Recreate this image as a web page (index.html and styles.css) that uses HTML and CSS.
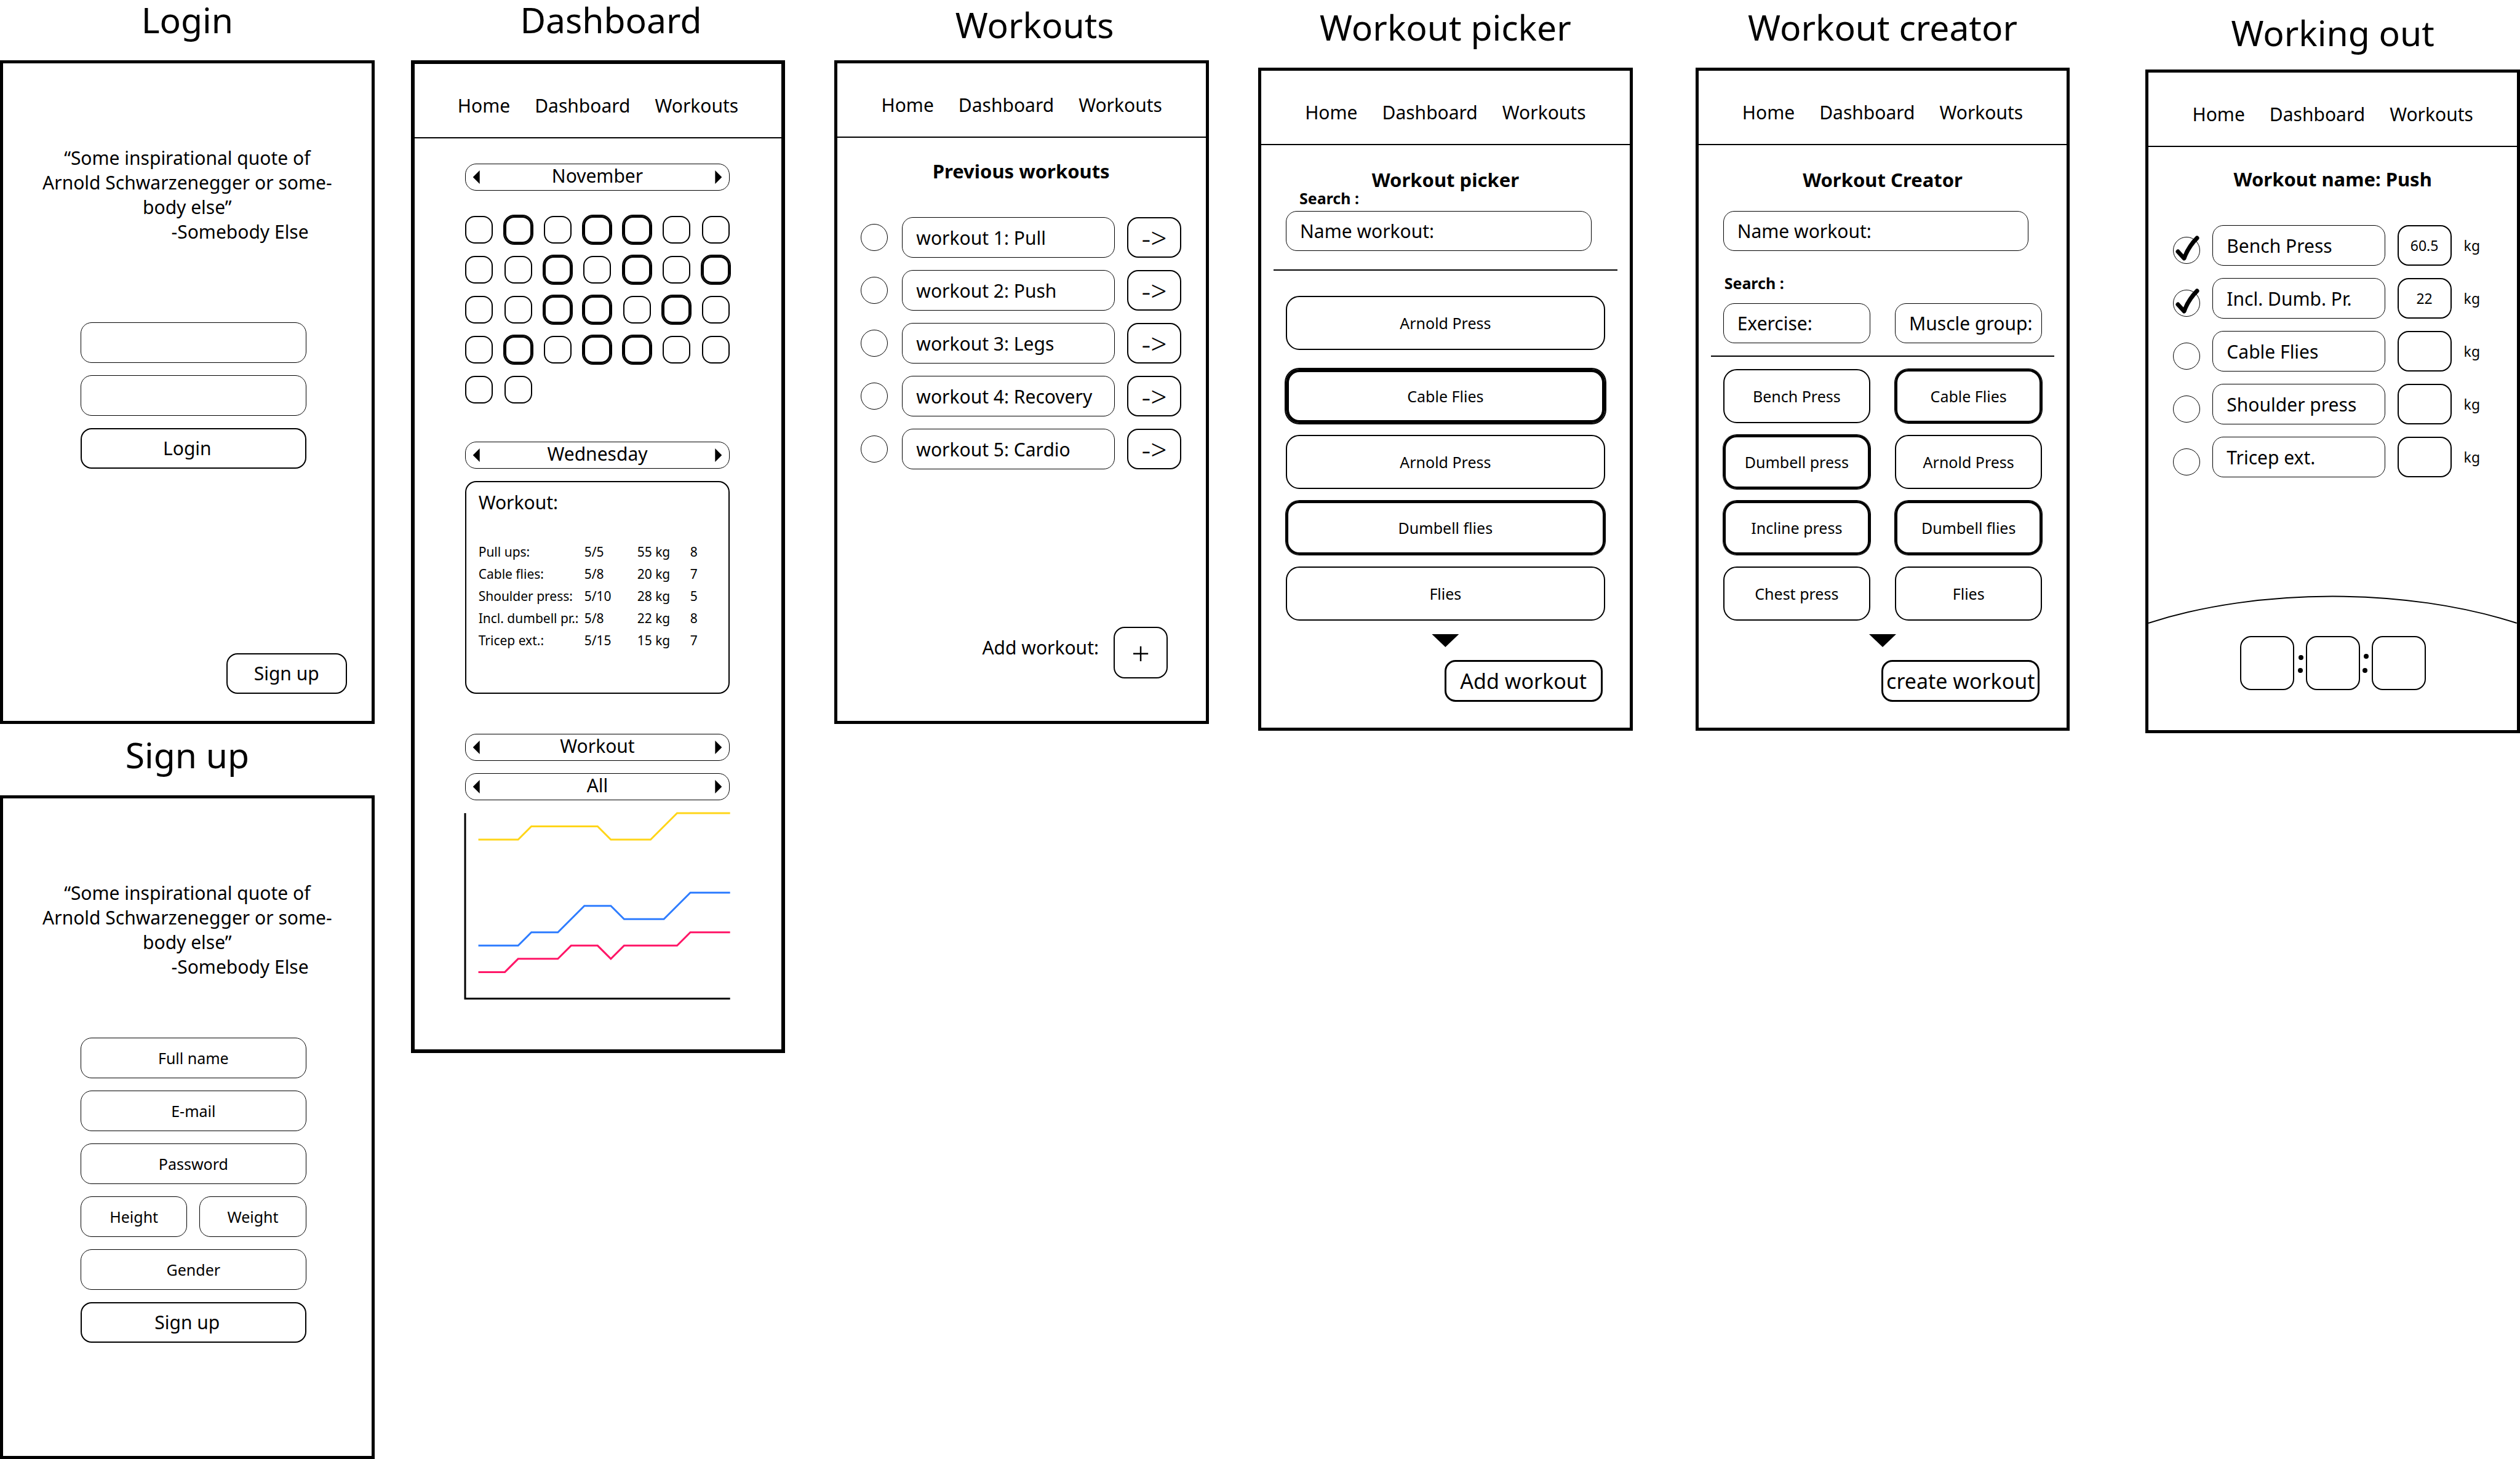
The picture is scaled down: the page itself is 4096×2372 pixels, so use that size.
FILE: index.html
```html
<!DOCTYPE html>
<html lang="en">
<head>
<meta charset="utf-8">
<title>Workout app wireframes</title>
<link rel="stylesheet" href="styles.css">
</head>
<body>
<main class="board">

  <div class="column">
    <section class="screen">
      <h2 class="title">Login</h2>
      <form class="frame auth">
        <blockquote class="quote">
          <p class="quote-text">“Some inspirational quote of<br>Arnold Schwarzenegger or some-<br>body else”</p>
          <footer class="quote-by">-Somebody Else</footer>
        </blockquote>
        <div class="fields login-fields">
          <input class="field" type="text" aria-label="User name">
          <input class="field" type="password" aria-label="Password">
          <button class="field submit" type="button">Login</button>
        </div>
        <button class="field go-signup" type="button">Sign up</button>
      </form>
    </section>
    <section class="screen signup">
      <h2 class="title">Sign up</h2>
      <form class="frame auth auth-signup">
        <blockquote class="quote">
          <p class="quote-text">“Some inspirational quote of<br>Arnold Schwarzenegger or some-<br>body else”</p>
          <footer class="quote-by">-Somebody Else</footer>
        </blockquote>
        <div class="fields signup-fields">
          <input class="field" type="text" placeholder="Full name" aria-label="Full name">
          <input class="field" type="email" placeholder="E-mail" aria-label="E-mail">
          <input class="field" type="password" placeholder="Password" aria-label="Password">
          <div class="field-pair">
            <input class="field" type="text" placeholder="Height" aria-label="Height">
            <input class="field" type="text" placeholder="Weight" aria-label="Weight">
          </div>
          <input class="field" type="text" placeholder="Gender" aria-label="Gender">
          <button class="field submit" type="button">Sign up</button>
        </div>
      </form>
    </section>
  </div>

  <section class="screen screen-dashboard">
    <h2 class="title title-right">Dashboard</h2>
    <div class="frame frame-heavy">
      <nav class="nav"><a href="#home">Home</a><a href="#dashboard">Dashboard</a><a href="#workouts">Workouts</a></nav>
      <div class="dash">
        <div class="stepper">
          <button type="button" class="step prev" aria-label="Previous month"></button>
          <span class="step-label">November</span>
          <button type="button" class="step next" aria-label="Next month"></button>
        </div>
        <div class="calendar">
          <button class="day" type="button" aria-label="1"></button>
          <button class="day done" type="button" aria-label="2"></button>
          <button class="day" type="button" aria-label="3"></button>
          <button class="day done" type="button" aria-label="4"></button>
          <button class="day done" type="button" aria-label="5"></button>
          <button class="day" type="button" aria-label="6"></button>
          <button class="day" type="button" aria-label="7"></button>
          <button class="day" type="button" aria-label="8"></button>
          <button class="day" type="button" aria-label="9"></button>
          <button class="day done" type="button" aria-label="10"></button>
          <button class="day" type="button" aria-label="11"></button>
          <button class="day done" type="button" aria-label="12"></button>
          <button class="day" type="button" aria-label="13"></button>
          <button class="day done" type="button" aria-label="14"></button>
          <button class="day" type="button" aria-label="15"></button>
          <button class="day" type="button" aria-label="16"></button>
          <button class="day done" type="button" aria-label="17"></button>
          <button class="day done" type="button" aria-label="18"></button>
          <button class="day" type="button" aria-label="19"></button>
          <button class="day done" type="button" aria-label="20"></button>
          <button class="day" type="button" aria-label="21"></button>
          <button class="day" type="button" aria-label="22"></button>
          <button class="day done" type="button" aria-label="23"></button>
          <button class="day" type="button" aria-label="24"></button>
          <button class="day done" type="button" aria-label="25"></button>
          <button class="day done" type="button" aria-label="26"></button>
          <button class="day" type="button" aria-label="27"></button>
          <button class="day" type="button" aria-label="28"></button>
          <button class="day" type="button" aria-label="29"></button>
          <button class="day" type="button" aria-label="30"></button>
        </div>
        <div class="stepper">
          <button type="button" class="step prev" aria-label="Previous day"></button>
          <span class="step-label">Wednesday</span>
          <button type="button" class="step next" aria-label="Next day"></button>
        </div>
        <div class="log">
          <h3 class="log-title">Workout:</h3>
          <table class="log-table">
            <tbody>
              <tr><th scope="row">Pull ups:</th><td>5/5</td><td>55 kg</td><td>8</td></tr>
              <tr><th scope="row">Cable flies:</th><td>5/8</td><td>20 kg</td><td>7</td></tr>
              <tr><th scope="row">Shoulder press:</th><td>5/10</td><td>28 kg</td><td>5</td></tr>
              <tr><th scope="row">Incl. dumbell pr.:</th><td>5/8</td><td>22 kg</td><td>8</td></tr>
              <tr><th scope="row">Tricep ext.:</th><td>5/15</td><td>15 kg</td><td>7</td></tr>
            </tbody>
          </table>
        </div>
        <div class="stepper">
          <button type="button" class="step prev" aria-label="Previous chart"></button>
          <span class="step-label">Workout</span>
          <button type="button" class="step next" aria-label="Next chart"></button>
        </div>
        <div class="stepper stepper-close">
          <button type="button" class="step prev" aria-label="Previous range"></button>
          <span class="step-label">All</span>
          <button type="button" class="step next" aria-label="Next range"></button>
        </div>
        <svg class="chart" viewBox="0 0 20 14" role="img" aria-label="Progress chart">
          <polyline class="axis" points="0,0 0,14 20,14"/>
          <polyline class="line line-a" points="1,2 4,2 5,1 10,1 11,2 14,2 16,0 20,0"/>
          <polyline class="line line-b" points="1,10 4,10 5,9 7,9 9,7 11,7 12,8 15,8 17,6 20,6"/>
          <polyline class="line line-c" points="1,12 3,12 4,11 7,11 8,10 10,10 11,11 12,10 16,10 17,9 20,9"/>
        </svg>
      </div>
    </div>
  </section>

  <section class="screen screen-workouts">
    <h2 class="title title-right">Workouts</h2>
    <div class="frame">
      <nav class="nav"><a href="#home">Home</a><a href="#dashboard">Dashboard</a><a href="#workouts">Workouts</a></nav>
      <div class="panel workouts">
        <h3 class="heading">Previous workouts</h3>
        <ul class="rows">
          <li class="row"><input class="tick" type="radio" name="w" id="w1"><label class="pill" for="w1">workout 1: Pull</label><button class="open" type="button">-&gt;</button></li>
          <li class="row"><input class="tick" type="radio" name="w" id="w2"><label class="pill" for="w2">workout 2: Push</label><button class="open" type="button">-&gt;</button></li>
          <li class="row"><input class="tick" type="radio" name="w" id="w3"><label class="pill" for="w3">workout 3: Legs</label><button class="open" type="button">-&gt;</button></li>
          <li class="row"><input class="tick" type="radio" name="w" id="w4"><label class="pill" for="w4">workout 4: Recovery</label><button class="open" type="button">-&gt;</button></li>
          <li class="row"><input class="tick" type="radio" name="w" id="w5"><label class="pill" for="w5">workout 5: Cardio</label><button class="open" type="button">-&gt;</button></li>
        </ul>
        <div class="add">
          <label class="add-label" for="add">Add workout:</label>
          <button class="add-button" id="add" type="button">+</button>
        </div>
      </div>
    </div>
  </section>

  <section class="screen screen-picker">
    <h2 class="title">Workout picker</h2>
    <div class="frame">
      <nav class="nav"><a href="#home">Home</a><a href="#dashboard">Dashboard</a><a href="#workouts">Workouts</a></nav>
      <div class="panel picker">
        <h3 class="heading">Workout picker</h3>
        <label class="search" for="pick">Search :</label>
        <input class="field name" id="pick" type="text" placeholder="Name workout:">
        <hr class="rule">
        <div class="options">
          <button class="option option-first" type="button">Arnold Press</button>
          <button class="option heaviest" type="button">Cable Flies</button>
          <button class="option" type="button">Arnold Press</button>
          <button class="option chosen" type="button">Dumbell flies</button>
          <button class="option" type="button">Flies</button>
        </div>
        <button class="more" type="button" aria-label="Show more"></button>
        <button class="confirm" type="button">Add workout</button>
      </div>
    </div>
  </section>

  <section class="screen screen-creator">
    <h2 class="title">Workout creator</h2>
    <div class="frame">
      <nav class="nav"><a href="#home">Home</a><a href="#dashboard">Dashboard</a><a href="#workouts">Workouts</a></nav>
      <div class="panel creator">
        <h3 class="heading">Workout Creator</h3>
        <input class="field name" type="text" placeholder="Name workout:" aria-label="Name workout">
        <label class="search" for="exercise">Search :</label>
        <div class="two">
          <input class="field name" id="exercise" type="text" placeholder="Exercise:">
          <input class="field name" type="text" placeholder="Muscle group:" aria-label="Muscle group">
        </div>
        <hr class="rule">
        <div class="options two">
          <button class="option" type="button">Bench Press</button>
          <button class="option chosen" type="button">Cable Flies</button>
          <button class="option chosen" type="button">Dumbell press</button>
          <button class="option" type="button">Arnold Press</button>
          <button class="option chosen" type="button">Incline press</button>
          <button class="option chosen" type="button">Dumbell flies</button>
          <button class="option" type="button">Chest press</button>
          <button class="option" type="button">Flies</button>
        </div>
        <button class="more" type="button" aria-label="Show more"></button>
        <button class="confirm" type="button">create workout</button>
      </div>
    </div>
  </section>

  <section class="screen screen-active">
    <h2 class="title">Working out</h2>
    <div class="frame">
      <nav class="nav"><a href="#home">Home</a><a href="#dashboard">Dashboard</a><a href="#workouts">Workouts</a></nav>
      <div class="panel active">
        <h3 class="heading">Workout name: Push</h3>
        <ul class="rows">
          <li class="row"><span class="mark"><input class="tick" type="checkbox" id="e1" checked><svg class="check" viewBox="0 0 44 44" aria-hidden="true"><path d="M8 24 L18 35 Q25 16 39 2"/></svg></span><label class="pill" for="e1">Bench Press</label><input class="kilos" type="text" value="60.5" aria-label="Bench Press weight"><span class="unit">kg</span></li>
          <li class="row"><span class="mark"><input class="tick" type="checkbox" id="e2" checked><svg class="check" viewBox="0 0 44 44" aria-hidden="true"><path d="M8 24 L18 35 Q25 16 39 2"/></svg></span><label class="pill" for="e2">Incl. Dumb. Pr.</label><input class="kilos" type="text" value="22" aria-label="Incline dumbell press weight"><span class="unit">kg</span></li>
          <li class="row"><span class="mark"><input class="tick" type="checkbox" id="e3"></span><label class="pill" for="e3">Cable Flies</label><input class="kilos" type="text" aria-label="Cable Flies weight"><span class="unit">kg</span></li>
          <li class="row"><span class="mark"><input class="tick" type="checkbox" id="e4"></span><label class="pill" for="e4">Shoulder press</label><input class="kilos" type="text" aria-label="Shoulder press weight"><span class="unit">kg</span></li>
          <li class="row"><span class="mark"><input class="tick" type="checkbox" id="e5"></span><label class="pill" for="e5">Tricep ext.</label><input class="kilos" type="text" aria-label="Tricep extension weight"><span class="unit">kg</span></li>
        </ul>
      </div>
      <svg class="arc" viewBox="0 0 600 46" preserveAspectRatio="none" aria-hidden="true"><path d="M0 45 C180 -13 420 -13 600 45"/></svg>
      <div class="timer">
        <input class="clock" type="text" aria-label="Hours">
        <svg class="colon" viewBox="0 0 19 88" aria-hidden="true"><circle cx="11" cy="35" r="4"/><circle cx="10" cy="56" r="4"/></svg>
        <input class="clock" type="text" aria-label="Minutes">
        <svg class="colon" viewBox="0 0 19 88" aria-hidden="true"><circle cx="10" cy="33" r="4"/><circle cx="8" cy="56" r="4"/></svg>
        <input class="clock" type="text" aria-label="Seconds">
      </div>
    </div>
  </section>

</main>
</body>
</html>
```
FILE: styles.css
```css
* {
  box-sizing: border-box;
}

body {
  margin: 0;
  background: #fff;
  color: #000;
  font-family: "Noto Sans", "Open Sans", sans-serif;
  font-size: 30px;
  line-height: 40px;
}

h2, h3, p, ul, blockquote {
  margin: 0;
  padding: 0;
}

button, input {
  margin: 0;
  padding: 0;
  background: none;
  border: 0 solid #000;
  color: #000;
  font: inherit;
}

input::placeholder {
  color: #000;
  opacity: 1;
}

/* Board: one column per screen */
.board {
  display: flex;
  align-items: flex-start;
}

.column,
.board > .screen {
  flex: 1 1 0;
  min-width: 0;
}

.screen {
  padding-top: 2px;
}

.signup {
  padding-top: 20px;
}

.screen-dashboard {
  margin-left: 59px;
}

.screen-workouts {
  margin-left: 80px;
  padding-top: 10px;
}

.screen-picker {
  margin-left: 80px;
  padding-top: 14px;
}

.screen-creator {
  margin-left: 102px;
  padding-top: 14px;
}

.screen-active {
  margin-left: 123px;
  padding-top: 23px;
}

.title {
  margin-bottom: 36px;
  font-size: 57px;
  font-weight: 400;
  line-height: 60px;
  text-align: center;
  white-space: nowrap;
}

.title-right {
  padding-left: 42px;
}

.screen-workouts .title {
  margin-bottom: 28px;
}

.screen-active .title {
  margin-bottom: 30px;
}

.frame {
  display: flex;
  flex-direction: column;
  border: 5px solid #000;
}

.frame-heavy {
  border-width: 6px;
}

/* Navigation */
.nav {
  display: flex;
  justify-content: center;
  gap: 40px;
  padding: 48px 0 31px;
  border-bottom: 2px solid #000;
}

.nav a {
  color: inherit;
  text-decoration: none;
}

/* Login and sign up */
.auth {
  padding: 134px 0 44px;
}

.auth-signup {
  padding-bottom: 184px;
}

.quote {
  text-align: center;
  white-space: nowrap;
}

.quote-by {
  padding-right: 102px;
  text-align: right;
}

.fields {
  display: flex;
  flex-direction: column;
  gap: 20px;
  padding: 0 106px 0 126px;
}

.login-fields {
  margin-top: 127px;
}

.signup-fields {
  margin-top: 95px;
  font-size: 25px;
}

.field-pair {
  display: flex;
  gap: 20px;
}

.field {
  width: 100%;
  min-width: 0;
  height: 66px;
  border-width: 1px;
  border-radius: 18px;
  text-align: center;
}

.submit {
  padding-right: 20px;
  border-width: 2px;
  font-size: 30px;
}

.go-signup {
  align-self: flex-end;
  width: 196px;
  margin: 300px 40px 0 0;
  border-width: 2px;
}

/* Dashboard */
.dash {
  padding: 41px 84px 83px 82px;
}

.stepper {
  display: flex;
  align-items: center;
  justify-content: space-between;
  height: 44px;
  padding: 0 12px;
  border: 1px solid #000;
  border-radius: 18px;
}

.step-label {
  padding-bottom: 4px;
}

.step {
  width: 11px;
  height: 22px;
  background: #000;
}

.prev {
  clip-path: polygon(100% 0, 100% 100%, 0 50%);
}

.next {
  clip-path: polygon(0 0, 100% 50%, 0 100%);
}

.calendar {
  display: grid;
  grid-template-columns: repeat(7, 45px);
  justify-content: space-between;
  row-gap: 20px;
  margin: 41px 0 62px;
}

.day {
  height: 45px;
  border-width: 2px;
  border-radius: 16px;
}

.done {
  border-width: 3px;
  box-shadow: 0 0 0 2px #000;
}

.log {
  height: 346px;
  margin: 20px 0 65px;
  padding: 13px 20px;
  border: 2px solid #000;
  border-radius: 18px;
}

.log-title {
  font-size: 30px;
  font-weight: 400;
}

.log-table {
  margin-top: 42px;
  border-collapse: collapse;
  font-size: 21px;
  line-height: 36px;
  white-space: nowrap;
}

.log-table th,
.log-table td {
  width: 86px;
  padding: 0;
  font-weight: 400;
  text-align: left;
}

.log-table th {
  width: 172px;
}

.log-table td:last-child {
  width: auto;
}

.stepper-close {
  margin-top: 20px;
}

.chart {
  display: block;
  width: 100%;
  margin-top: 21px;
  overflow: visible;
  fill: none;
  stroke-width: 3px;
}

.chart polyline {
  vector-effect: non-scaling-stroke;
}

.axis {
  stroke: #000;
}

.line-a {
  stroke: #ffd519;
}

.line-b {
  stroke: #2f7dff;
}

.line-c {
  stroke: #ff1667;
}

/* Panels under the navigation */
.panel {
  padding: 40px 40px 42px;
}

.heading {
  font-size: 31px;
  font-weight: 700;
  line-height: 32px;
  text-align: center;
  white-space: nowrap;
}

.rows {
  display: flex;
  flex-direction: column;
  gap: 20px;
  margin-top: 59px;
  list-style: none;
}

.row {
  display: flex;
  align-items: center;
  gap: 20px;
}

.tick {
  flex: none;
  display: block;
  width: 44px;
  height: 44px;
  border-width: 1px;
  border-radius: 50%;
  appearance: none;
}

.pill {
  flex: 1;
  height: 66px;
  padding: 13px 22px;
  border: 1px solid #000;
  border-radius: 18px;
  line-height: 40px;
  white-space: nowrap;
}

/* Workouts */
.workouts {
  padding: 38px 40px 69px 38px;
}

.workouts .pill {
  margin-left: 3px;
}

.open {
  width: 88px;
  height: 66px;
  border-width: 2px;
  border-radius: 18px;
  font-size: 46px;
  font-weight: 300;
}

.add {
  display: flex;
  align-items: center;
  justify-content: flex-end;
  gap: 24px;
  margin-top: 256px;
  padding-right: 22px;
}

.add-label {
  padding-bottom: 16px;
}

.add-button {
  width: 88px;
  height: 84px;
  border-width: 2px;
  border-radius: 18px;
  font-size: 52px;
  font-weight: 300;
}

/* Picker and creator */
.search {
  display: block;
  font-size: 25px;
  font-weight: 700;
  line-height: 28px;
}

.name {
  display: block;
  height: 65px;
  padding: 0 10px 0 22px;
  text-align: left;
}

.picker .search {
  margin-bottom: 7px;
  padding-left: 22px;
}

.panel > .name {
  width: calc(100% - 22px);
}

.rule {
  height: 2px;
  margin: 30px -20px 41px;
  border: 0;
  background: #000;
}

.options {
  display: grid;
  gap: 19px;
}

.option {
  height: 88px;
  border-width: 2px;
  border-radius: 22px;
  font-size: 25px;
}

.option-first {
  margin-bottom: 12px;
}

.chosen {
  border-width: 4px;
  box-shadow: 0 0 0 1px #000;
}

.heaviest {
  border-width: 5px;
  box-shadow: 0 0 0 2px #000;
}

.more {
  display: block;
  width: 44px;
  height: 21px;
  margin: 22px auto 21px;
  background: #000;
  clip-path: polygon(0 0, 100% 0, 50% 100%);
}

.confirm {
  display: block;
  width: 257px;
  height: 68px;
  margin: 0 4px 0 auto;
  border-width: 3px;
  border-radius: 18px;
  font-size: 34px;
  white-space: nowrap;
}

.creator > .name {
  margin: 35px 0 38px;
}

.creator .search {
  margin-bottom: 19px;
  padding-left: 2px;
}

.two {
  display: grid;
  grid-template-columns: 1fr 1fr;
  column-gap: 40px;
}

.creator .rule {
  margin: 20px -20px 20px;
}

/* Working out */
.active {
  padding: 36px 40px 0;
}

.active .rows {
  padding-right: 20px;
}

.mark {
  position: relative;
  flex: none;
  padding-top: 16px;
}

.check {
  position: absolute;
  left: 0;
  bottom: 0;
  width: 44px;
  height: 44px;
  overflow: visible;
  fill: none;
  stroke: #000;
  stroke-width: 7px;
  stroke-linecap: round;
  stroke-linejoin: round;
  pointer-events: none;
}

.kilos,
.clock {
  width: 88px;
  height: 66px;
  border-width: 2px;
  border-radius: 18px;
  font-size: 23px;
  text-align: center;
}

.unit {
  font-size: 23px;
}

.arc {
  display: block;
  width: 100%;
  height: 46px;
  margin-top: 192px;
  fill: none;
  stroke: #000;
  stroke-width: 2px;
}

.timer {
  display: flex;
  justify-content: center;
  padding: 20px 0 65px;
}

.clock {
  height: 88px;
}

.colon {
  width: 19px;
  height: 88px;
}
```
